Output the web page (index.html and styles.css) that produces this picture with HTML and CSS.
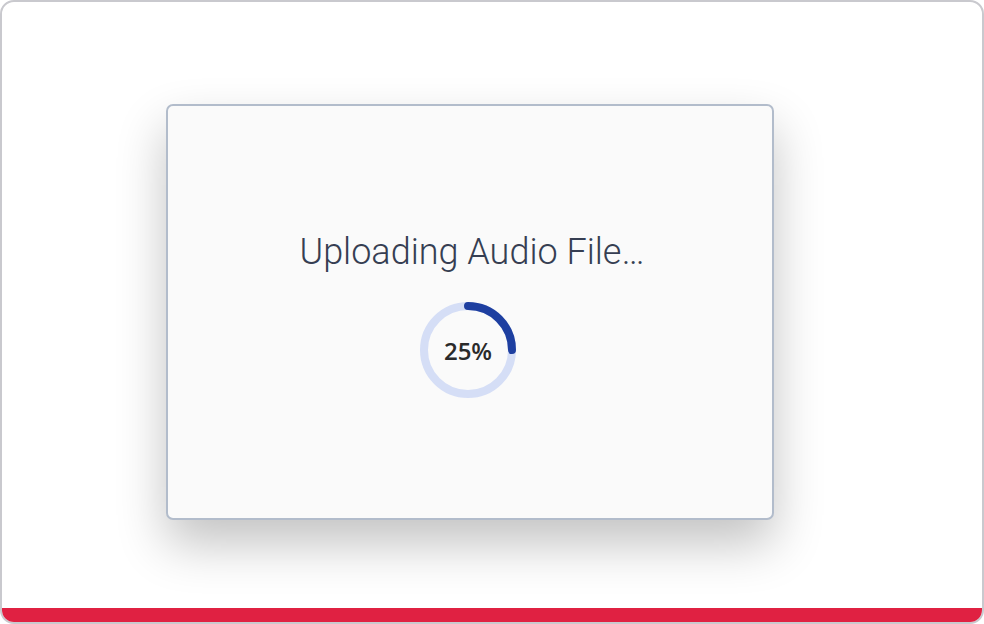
FILE: index.html
```html
<!DOCTYPE html>
<html>
<head>
<meta charset="utf-8">
<link rel="stylesheet" href="styles.css">
</head>
<body>
<div class="frame">
  <main class="stage">
    <section class="card">
      <h1 class="title">Uploading Audio File…</h1>
      <div class="progress">
        <svg class="ring" width="100" height="100" viewBox="0 0 100 100">
          <circle cx="50" cy="50" r="44" fill="none" stroke="#d5def6" stroke-width="8"/>
          <circle cx="50" cy="50" r="44" fill="none" stroke="#1e3fa0" stroke-width="8" stroke-linecap="round" stroke-dasharray="69.12 276.46" transform="rotate(-90 50 50)"/>
        </svg>
        <span class="pct">25%</span>
      </div>
    </section>
  </main>
  <div class="bar"></div>
</div>
</body>
</html>
```
FILE: styles.css
```css
html, body {
  margin: 0;
  padding: 0;
  background: #ffffff;
}
.frame {
  box-sizing: border-box;
  width: 984px;
  height: 624px;
  border: 2px solid #c9c9ce;
  border-radius: 14px;
  overflow: hidden;
  display: flex;
  flex-direction: column;
  background: #ffffff;
}
.stage {
  flex: 1;
  padding: 102px 0 0 164px;
}
.card {
  box-sizing: border-box;
  width: 608px;
  height: 416px;
  border: 2px solid #b2bccb;
  border-radius: 7px;
  background: #fafafa;
  box-shadow: 0 24px 50px rgba(0, 0, 0, 0.24);
  display: flex;
  flex-direction: column;
  align-items: center;
  padding-top: 124px;
}
.title {
  margin: 0;
  font-family: Roboto, "Liberation Sans", sans-serif;
  font-weight: 300;
  font-size: 36px;
  line-height: 44px;
  color: #363e52;
  padding-left: 4px;
}
.progress {
  position: relative;
  width: 100px;
  height: 100px;
  margin-top: 26px;
  margin-left: -4px;
}
.ring {
  display: block;
}
.pct {
  position: absolute;
  inset: 0;
  display: flex;
  align-items: center;
  justify-content: center;
  font-family: "Open Sans", "Noto Sans", sans-serif;
  font-weight: 600;
  font-size: 24px;
  color: #2a2a2a;
}
.bar {
  height: 14px;
  background: #e02142;
}
```
